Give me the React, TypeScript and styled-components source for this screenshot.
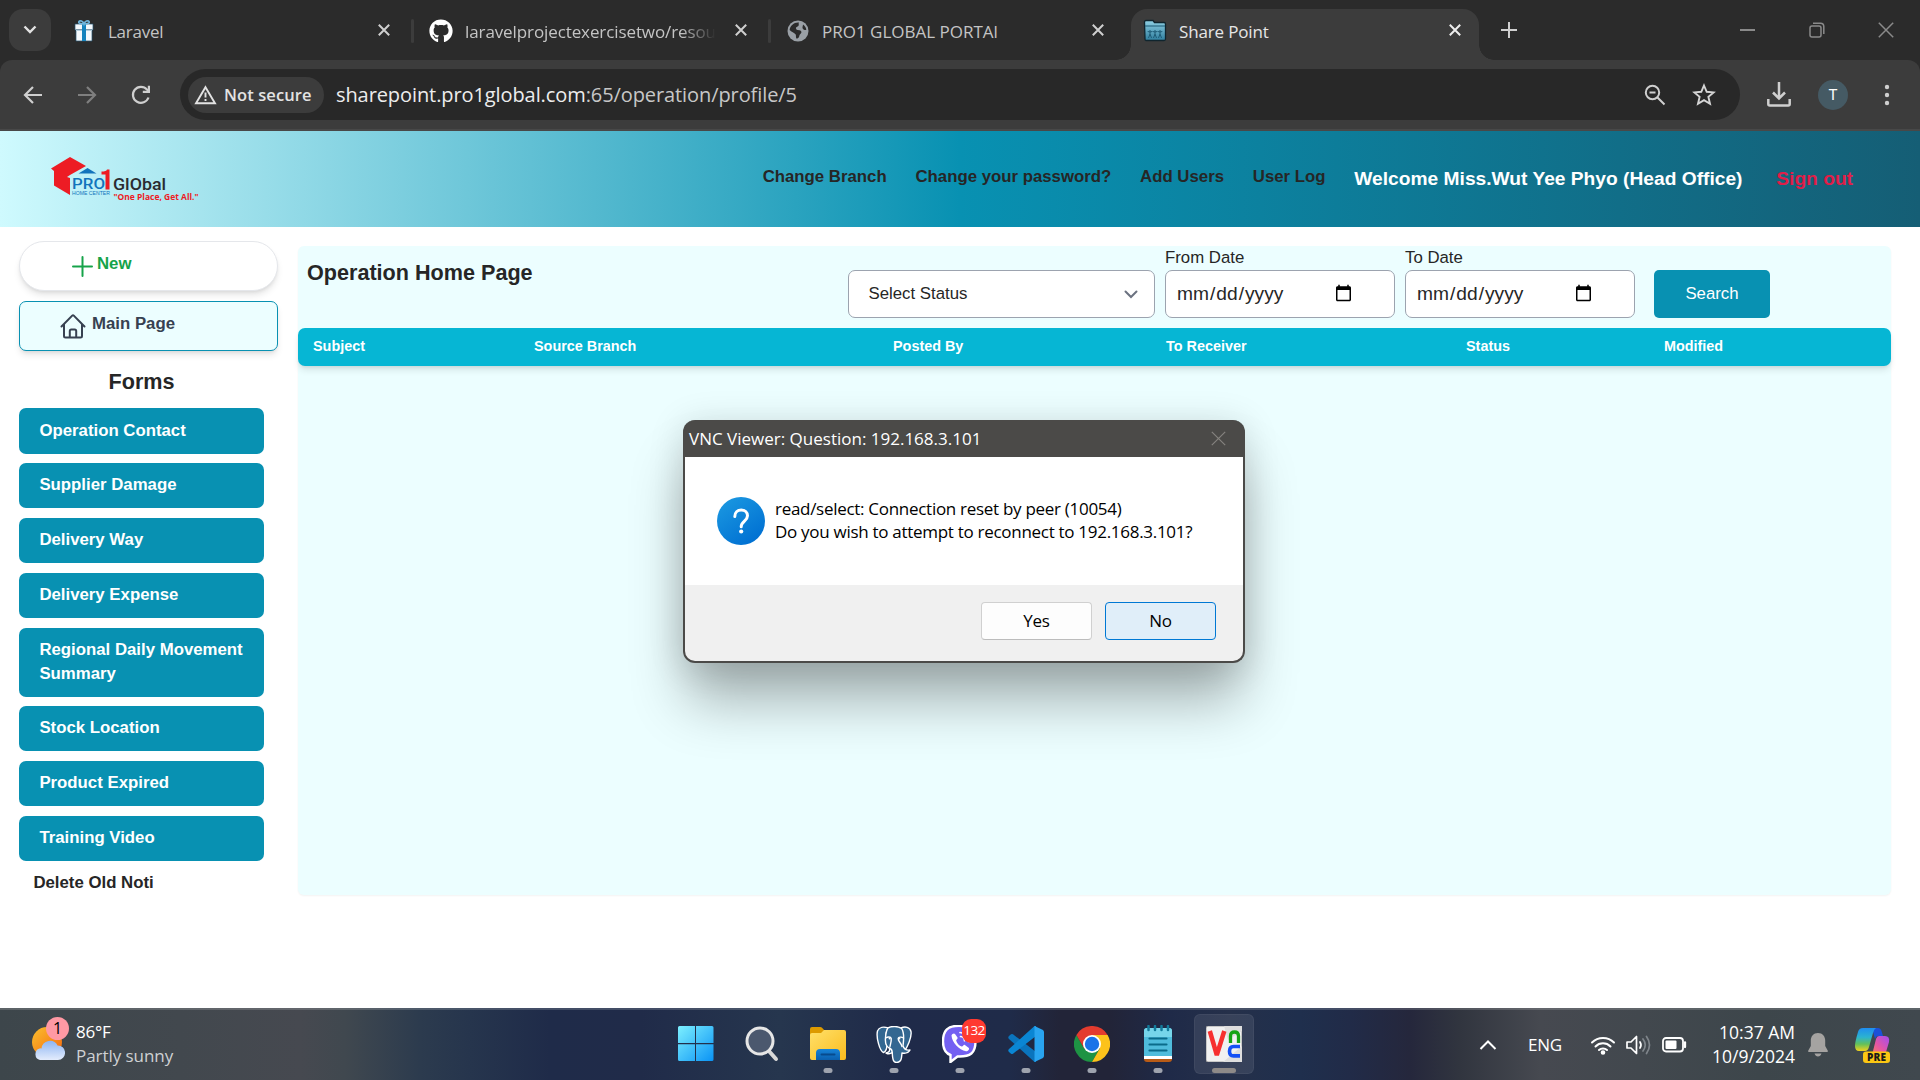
import React from "react";
import styled, { createGlobalStyle, css } from "styled-components";
import { FaGithub } from "react-icons/fa";

const ui = `"Open Sans", "Noto Sans", sans-serif`;
const arial = `"Liberation Sans", Arial, sans-serif`;

const GlobalStyle = createGlobalStyle`
  * { box-sizing: border-box; }
  html, body { margin: 0; padding: 0; background: #fff; overflow: hidden; }
  button { margin: 0; padding: 0; border: 0; background: none; font: inherit; color: inherit; letter-spacing: inherit; }
`;

const Screen = styled.div`
  position: relative;
  display: flex;
  flex-direction: column;
  width: 1920px;
  height: 1080px;
  overflow: hidden;
  font-family: ${arial};
  color: #262626;
`;

/* ---------- browser chrome ---------- */

const TabStrip = styled.div`
  display: flex;
  height: 60px;
  padding-left: 9px;
  background: #2b2b2b;
  font-family: ${ui};
`;

const TabSearch = styled.button`
  display: flex;
  align-items: center;
  justify-content: center;
  width: 42px;
  height: 42px;
  margin: 9px 4px 0 0;
  border-radius: 14px;
  background: #3c3c3c;
`;

const Tab = styled.div<{ $active?: boolean }>`
  position: relative;
  display: flex;
  align-items: center;
  width: 357px;
  height: 60px;
  padding: 2px 19px 0 17px;
  z-index: 0;
  color: ${(p) => (p.$active ? "#e6e6e6" : "#c4c4c4")};
  ${(p) =>
    p.$active &&
    css`
      &::before {
        content: "";
        position: absolute;
        z-index: -1;
        inset: 9px 4px 0 5px;
        border-radius: 16px 16px 0 0;
        background: #3c3c3c;
      }
      &::after {
        content: "";
        position: absolute;
        z-index: -1;
        left: -10px;
        right: -11px;
        bottom: 0;
        height: 15px;
        background:
          radial-gradient(circle at 0 0, transparent 14.5px, #3c3c3c 15px) left / 15px 15px no-repeat,
          radial-gradient(circle at 100% 0, transparent 14.5px, #3c3c3c 15px) right / 15px 15px no-repeat;
      }
    `}
`;

const TabDivider = styled.span`
  position: absolute;
  right: -2px;
  top: 19px;
  width: 3px;
  height: 24px;
  border-radius: 2px;
  background: #3c3c3c;
`;

const TabIcon = styled.span`
  display: flex;
  flex: none;
  align-items: center;
  justify-content: center;
  width: 24px;
  height: 24px;
  margin-right: 12px;
`;

const TabTitle = styled.span<{ $fade?: boolean; $ls?: number }>`
  flex: none;
  width: 251px;
  padding-top: 2px;
  overflow: hidden;
  white-space: nowrap;
  font-size: 17px;
  line-height: 26px;
  letter-spacing: ${(p) => p.$ls ?? -0.2}px;
  ${(p) => p.$fade && "mask-image: linear-gradient(90deg, #000 86%, transparent 100%);"}
`;

const TabClose = styled.button`
  display: flex;
  align-items: center;
  justify-content: center;
  width: 18px;
  height: 18px;
  margin: -2px 0 0 16px;
`;

const NewTab = styled.button`
  display: flex;
  align-items: center;
  justify-content: center;
  width: 42px;
  height: 60px;
  margin-left: 5px;
`;

const WindowControls = styled.div`
  display: flex;
  align-items: center;
  margin-left: auto;
  color: #8a8a8a;
`;

const ControlButton = styled.button`
  display: flex;
  align-items: center;
  justify-content: center;
  width: 69px;
  height: 58px;
`;

const ToolbarBack = styled.div`
  background: #2b2b2b;
`;

const Toolbar = styled.div`
  display: flex;
  align-items: center;
  height: 71px;
  padding: 0 0 0 12px;
  border-bottom: 2px solid #484848;
  border-radius: 12px 12px 0 0;
  background: #3c3c3c;
  font-family: ${ui};
`;

const ToolButton = styled.button<{ $w: number }>`
  display: flex;
  flex: none;
  align-items: center;
  justify-content: center;
  width: ${(p) => p.$w}px;
  height: 42px;
`;

const Omnibox = styled.div`
  display: flex;
  align-items: center;
  width: 1560px;
  height: 51px;
  margin-left: 18px;
  padding: 0 11px 0 8px;
  border-radius: 26px;
  background: #282828;
  flex: none;
`;

const SecurityChip = styled.span`
  display: flex;
  align-items: center;
  gap: 7px;
  width: 136px;
  height: 36px;
  margin-right: 12px;
  padding-left: 6px;
  border-radius: 18px;
  background: #3c3c3c;
  color: #e3e3e3;
  font-size: 16.5px;
  font-weight: 600;
  letter-spacing: 0.1px;
  white-space: nowrap;
`;

const Url = styled.span`
  flex: 1;
  color: #c7c7c7;
  font-size: 20px;
  letter-spacing: -0.09px;
  b { font-weight: 400; color: #ededed; }
`;

const Avatar = styled.span`
  display: flex;
  align-items: center;
  justify-content: center;
  width: 30px;
  height: 30px;
  margin-right: 12px;
  border-radius: 50%;
  background: #455a64;
  color: #fff;
  font: 15px Roboto, sans-serif;
`;

/* ---------- web page ---------- */

const SiteHeader = styled.header`
  display: flex;
  align-items: center;
  height: 96px;
  padding: 0 67px 0 51px;
  background: linear-gradient(90deg, #cffafe, #0891b2 50%, #155e75);
`;

const LogoBox = styled.div`
  width: 160px;
  height: 50px;
  margin-top: 6px;
`;

const Nav = styled.nav`
  display: flex;
  align-items: center;
  gap: 28.8px;
  margin-left: auto;
  white-space: nowrap;
  font-weight: 700;
`;

const NavLink = styled.a`
  margin-top: -4px;
  font-size: 16.8px;
  line-height: 24px;
`;

const Welcome = styled.span`
  color: #fff;
  font-size: 19.2px;
  line-height: 28px;
`;

const SignOut = styled(Welcome)`
  margin-left: 5px;
  color: #e11d48;
`;

const Page = styled.main`
  display: flex;
  height: 781px;
  padding: 14px 29px 0 19px;
  background: #fff;
`;

const Sidebar = styled.aside`
  display: flex;
  flex-direction: column;
  flex: none;
  width: 259px;
  margin-right: 20px;
`;

const SideAction = styled.button<{ $pill?: boolean }>`
  display: flex;
  flex: none;
  align-items: center;
  height: 50px;
  margin-bottom: 10px;
  padding-left: ${(p) => (p.$pill ? 52 : 40)}px;
  gap: ${(p) => (p.$pill ? 4 : 6)}px;
  border: 1px solid ${(p) => (p.$pill ? "#e5e7eb" : "#0891b2")};
  border-radius: ${(p) => (p.$pill ? 25 : 7)}px;
  background: ${(p) => (p.$pill ? "#fff" : "#ecfeff")};
  color: ${(p) => (p.$pill ? "#16a34a" : "#374151")};
  box-shadow: 0 5px 7px -1px rgba(0, 0, 0, 0.1), 0 2px 4px -2px rgba(0, 0, 0, 0.12);
  font-size: 16.8px;
  font-weight: 700;
  svg { flex: none; }
  span { margin-top: -5px; }
`;

const FormsTitle = styled.h2`
  width: 245px;
  margin: 7px 0 12.4px;
  text-align: center;
  font-size: 21.6px;
  line-height: 28px;
`;

const FormList = styled.div`
  display: flex;
  flex-direction: column;
  gap: 9.6px;
  width: 245px;
`;

const FormButton = styled.button`
  min-height: 45.2px;
  padding: 10.2px 18px 11px 20.4px;
  border-radius: 7px;
  background: #0891b2;
  color: #fff;
  text-align: left;
  font-size: 16.8px;
  font-weight: 700;
  line-height: 24px;
`;

const DeleteLink = styled.a`
  margin: 10px 0 0 14.4px;
  font-size: 16.8px;
  font-weight: 700;
  line-height: 24px;
`;

const Panel = styled.section`
  flex: 1;
  height: 649px;
  margin-top: 5px;
  border-radius: 6px;
  background: #ecfeff;
  box-shadow: 0 1px 2px rgba(0, 0, 0, 0.05);
`;

const FilterBar = styled.div`
  display: flex;
  align-items: flex-end;
  height: 72px;
  padding-left: 9px;
`;

const PageTitle = styled.h1`
  align-self: flex-start;
  width: 541px;
  margin: 13px 0 0;
  font-size: 21.6px;
  line-height: 28px;
`;

const fieldBox = css`
  height: 48px;
  border: 1px solid #9ca3af;
  border-radius: 7px;
  background: #fff;
`;

const StatusSelect = styled.div`
  ${fieldBox}
  display: flex;
  align-items: center;
  justify-content: space-between;
  width: 307px;
  margin-right: 10px;
  padding: 0 16px 0 19.5px;
  font-size: 16.8px;
`;

const Field = styled.label`
  display: flex;
  flex-direction: column;
  width: 230px;
  margin-right: 10px;
  font-size: 16.8px;
  line-height: 24px;
`;

const DateInput = styled.input`
  ${fieldBox}
  width: 230px;
  padding: 0 39px 0 10px;
  color: #262626;
  font-family: ${arial};
  font-size: 19.2px;
`;

const SearchButton = styled.button`
  width: 116px;
  height: 48px;
  margin-left: 9px;
  border-radius: 5px;
  background: #0891b2;
  color: #fff;
  font-size: 16.8px;
`;

const TableHead = styled.div`
  display: grid;
  grid-template-columns: 221px 359px 273px 300px 198px 1fr;
  align-items: center;
  height: 38px;
  margin-top: 10px;
  padding: 0 0 3px 15px;
  border-radius: 7px;
  background: #06b6d4;
  color: #fff;
  box-shadow: 0 5px 7px -1px rgba(0, 0, 0, 0.1), 0 2px 4px -2px rgba(0, 0, 0, 0.12);
  font-size: 14.4px;
  font-weight: 700;
`;

/* ---------- message box ---------- */

const Dialog = styled.div`
  position: absolute;
  left: 683px;
  top: 420px;
  display: flex;
  flex-direction: column;
  width: 562px;
  height: 243px;
  border: 2px solid #4b4a48;
  border-top: 0;
  border-radius: 12px;
  background: #4b4a48;
  box-shadow: 0 42px 56px -4px rgba(0, 0, 0, 0.3), 0 4px 36px rgba(0, 0, 0, 0.14);
  color: #000;
  font-family: ${ui};
  font-size: 17px;
  letter-spacing: -0.29px;
`;

const DialogTitle = styled.div`
  display: flex;
  align-items: center;
  justify-content: space-between;
  height: 37px;
  padding: 0 17px 1px 4px;
  color: #fff;
  letter-spacing: 0;
`;

const DialogBody = styled.div`
  display: flex;
  align-items: center;
  gap: 10px;
  height: 128px;
  padding-left: 32px;
  background: #fff;
  line-height: 23px;
  white-space: nowrap;
  p { margin: -2px 0 0; }
`;

const DialogFooter = styled.div`
  display: flex;
  flex: 1;
  justify-content: flex-end;
  gap: 13px;
  padding: 17px 27px 0 0;
  border-radius: 0 0 10px 10px;
  background: #f0f0f0;
`;

const DialogButton = styled.button<{ $focus?: boolean }>`
  width: 111px;
  height: 38px;
  padding-bottom: 2px;
  border: 1px solid ${(p) => (p.$focus ? "#0078d4" : "#d0d0d0")};
  border-bottom-color: ${(p) => (p.$focus ? "#0078d4" : "#bcbcbc")};
  border-radius: 4px;
  background: ${(p) => (p.$focus ? "#e0eef9" : "#fdfdfd")};
`;

/* ---------- taskbar ---------- */

const Taskbar = styled.footer`
  display: grid;
  grid-template-columns: 664px 596px 1fr;
  height: 72px;
  border-top: 2px solid rgba(255, 255, 255, 0.16);
  background: linear-gradient(
    90deg,
    #3d464b 0, #42484e 180px, #464950 300px, #40484f 345px, #2c3b4e 420px, #26354d 470px,
    #1f2b49 550px, #202b49 640px, #26364e 780px, #1f2a49 900px, #1f2b49 1010px, #222438 1060px, #222438 1110px,
    #1f2a48 1170px, #25304a 1230px, #1f2f4d 1300px, #212b48 1350px, #25273c 1410px, #31353f 1460px,
    #464950 1540px, #42484e 1640px, #3d464b 1760px, #40484e 1920px
  );
  background-origin: border-box;
  color: #fff;
  font-family: ${ui};
  font-size: 17px;
  letter-spacing: -0.2px;
`;

const Weather = styled.div`
  display: flex;
  gap: 9px;
  padding: 6px 0 0 31px;
`;

const WeatherIcon = styled.div`
  position: relative;
  width: 36px;
  height: 50px;
  padding-top: 9px;
`;

const WeatherBadge = styled.span`
  position: absolute;
  left: 15px;
  top: 1px;
  width: 23px;
  height: 23px;
  border-radius: 50%;
  background: #ff99a4;
  color: #000;
  text-align: center;
  font-size: 16px;
  line-height: 23px;
`;

const WeatherText = styled.div`
  padding-top: 4px;
  line-height: 24px;
  small { display: block; color: #cfd1d3; font-size: inherit; letter-spacing: -0.05px; }
`;

const Apps = styled.div`
  display: flex;
  gap: 6px;
  padding: 4px 0 0 2px;
`;

const TaskbarApp = styled.div<{ $state?: "open" | "active" }>`
  position: relative;
  display: flex;
  flex: none;
  align-items: center;
  justify-content: center;
  width: 60px;
  height: 60px;
  border-radius: 6px;
  ${(p) => p.$state === "active" && "background: rgba(255,255,255,.09); box-shadow: inset 0 0 0 1px rgba(255,255,255,.05);"}
  ${(p) =>
    p.$state &&
    css`
      &::after {
        content: "";
        position: absolute;
        bottom: 1px;
        left: 50%;
        width: ${p.$state === "active" ? 24 : 9}px;
        height: 5px;
        transform: translateX(-50%);
        border-radius: 3px;
        background: ${p.$state === "active" ? "#8e8a88" : "#9ea3ae"};
      }
    `}
`;

const CountBadge = styled.span`
  position: absolute;
  left: 32px;
  top: 5px;
  width: 24px;
  height: 24px;
  border-radius: 9px;
  background: #ff3a30;
  text-align: center;
  font-size: 13.5px;
  line-height: 23px;
  letter-spacing: -0.6px;
`;

const Tray = styled.div`
  display: flex;
  align-items: center;
  justify-content: flex-end;
  padding-right: 30px;
`;

const Language = styled.span`
  width: 35px;
  margin: -2px 27px 0 31px;
  white-space: nowrap;
`;

const TrayStatus = styled.div`
  display: flex;
  align-items: center;
  gap: 10px;
  width: 98px;
`;

const Clock = styled.div`
  width: 108px;
  margin-top: -2px;
  padding-right: 1px;
  text-align: right;
  white-space: nowrap;
  font-size: 17.5px;
  letter-spacing: 0;
  line-height: 24px;
`;

const TrayBell = styled.div`
  display: flex;
  margin: 0 27px 0 12px;
`;

/* ---------- drawings ---------- */

const Cross = ({ s = 12, c = "#d0d0d0", w = 2 }: { s?: number; c?: string; w?: number }) => (
  <svg width={s} height={s} viewBox={`0 0 ${s} ${s}`}>
    <path d={`M.8 .8L${s - 0.8} ${s - 0.8}M${s - 0.8} .8L.8 ${s - 0.8}`} stroke={c} strokeWidth={w} />
  </svg>
);

const Gift = () => (
  <svg width="22" height="24" viewBox="0 0 22 24">
    <path d="M2 5h18v6H2zM3 11h16v11H3z" fill="#f4f9fc" stroke="#24506f" strokeWidth=".7" />
    <path d="M9 5h4v17H9z" fill="#1583bd" />
    <path d="M11 5C7 5 5 4 6 2.500S10 2 11 5C12 2 15 1 16 2.500S15 5 11 5" fill="none" stroke="#6fb4da" strokeWidth="1.700" />
    <path d="M3 11.500h6m4 0h6" stroke="#b5cfdd" />
  </svg>
);

const Globe = () => (
  <svg width="22" height="22" viewBox="0 0 22 22">
    <circle cx="11" cy="11" r="10.500" fill="#9aa0a6" />
    <path d="M12 2.500c-1 1.500.8 2.500-1 3.700-2 1-2.500 1.200-1.700 3 1.200 1.300 4.200.3 5 2.300.7 2-1.800 2.600-2 4.600-.2 1.200-1.200 2.600-2.400 2.600-1.500-.5-.6-3-1.200-4.200C7.700 12.700 5 12.500 2.600 10c.6-4.500 4.600-8 9.400-7.500zM16 4.500c1.700 1 3 3 3.300 5.200-1.300.5-3 0-3.600-1.300-.6-1.400.3-2.300.3-3.900z" fill="#2b2b2b" />
  </svg>
);

const PeopleFolder = () => (
  <svg width="24" height="24" viewBox="0 0 24 24">
    <defs>
      <linearGradient id="folder" x1="0" y1="0" x2="0" y2="1">
        <stop offset="0" stopColor="#8fd0e4" />
        <stop offset="1" stopColor="#2f7e9e" />
      </linearGradient>
    </defs>
    <path d="M1.500 3q0-1.500 1.500-1.500h7l1.500 2H21q1.500 0 1.500 1.500V20q0 1.500-1.500 1.500H3Q2 21.500 2 20z" fill="url(#folder)" stroke="#10252e" strokeWidth="1.300" />
    <path d="M2 7h20" stroke="#1d5b75" />
    <g stroke="#1d5a75" strokeWidth="1" fill="none">
      <path d="M7 11v4l-1.500 4m1.500-4l1.500 4M4.700 12.500L7 13l2.300-.5M12 11v4l-1.500 4m1.500-4l1.500 4M9.700 12.500L12 13l2.300-.5M17 11v4l-1.500 4m1.500-4l1.500 4M14.700 12.500L17 13l2.300-.5" />
    </g>
  </svg>
);

const HomeIcon = () => (
  <svg width="26" height="27" viewBox="0 0 26 27" fill="none" stroke="currentColor" strokeWidth="2" strokeLinecap="round" strokeLinejoin="round">
    <path d="M1.500 13.500L12.200 2.600q.8-.8 1.600 0L24.500 13.500M4 11.200V23q0 1.500 1.500 1.500h15Q22 24.500 22 23V11.200M9.800 24.300V18q0-1.500 1.500-1.500h3.400q1.500 0 1.500 1.500v6.300" />
  </svg>
);

const SiteLogo = () => (
  <svg width="160" height="50" viewBox="0 0 160 50">
    <path d="M19 0L0 11.500 3 14v14.500l16 9.500V21l-3-1 3-2 16-9z" fill="#ed1c24" />
    <path d="M36.500 11l9 5.500h-18z" fill="#1274bc" />
    <text x="21" y="32" fontFamily="Roboto, sans-serif" fontSize="15.500" fontWeight="500" fill="#1274bc" textLength="33" lengthAdjust="spacingAndGlyphs">PRO</text>
    <path d="M50.500 14.500q5 0 5.500-2h2.500V32.500h-4V17.500h-4z" fill="#ed1c24" />
    <text x="21" y="37.700" fontFamily="Liberation Sans, sans-serif" fontSize="5.200" fill="#1274bc" textLength="38" lengthAdjust="spacingAndGlyphs">HOME CENTER</text>
    <text x="62" y="32.700" fontFamily="Roboto, sans-serif" fontSize="17" fontWeight="500" fill="#2b2b30" textLength="53" lengthAdjust="spacingAndGlyphs">GlObal</text>
    <text x="62.500" y="42.700" fontFamily="Open Sans, sans-serif" fontSize="9" fontWeight="700" fill="#ed1c24" textLength="85" lengthAdjust="spacingAndGlyphs">"One Place, Get All."</text>
  </svg>
);

const QuestionIcon = () => (
  <svg width="48" height="48" viewBox="0 0 48 48">
    <defs>
      <linearGradient id="question" x1="0" y1="0" x2=".7" y2="1">
        <stop offset="0" stopColor="#1d9be2" />
        <stop offset="1" stopColor="#0070d2" />
      </linearGradient>
    </defs>
    <circle cx="24" cy="24" r="24" fill="url(#question)" />
    <path d="M17.800 19.500c0-4 2.700-6.500 6.400-6.500s6.300 2.400 6.300 5.800c0 5.200-6.300 5.500-6.300 11" fill="none" stroke="#fff" strokeWidth="3" strokeLinecap="round" />
    <circle cx="24.200" cy="34.500" r="2.100" fill="#fff" />
  </svg>
);

const WeatherDrawing = () => (
  <svg width="34" height="36" viewBox="0 0 34 36">
    <defs>
      <linearGradient id="sun" x1="0" y1="0" x2="1" y2="1">
        <stop offset="0" stopColor="#fbc02d" />
        <stop offset="1" stopColor="#f4650f" />
      </linearGradient>
      <linearGradient id="cloud" x1="0" y1="0" x2="0" y2="1">
        <stop offset="0" stopColor="#8db5f3" />
        <stop offset="1" stopColor="#e3ecfc" />
      </linearGradient>
    </defs>
    <circle cx="16" cy="17" r="15" fill="url(#sun)" />
    <path d="M9 35a6 6 0 01-.5-11.500 5 5 0 012-.1 8.500 8.500 0 0116-3 7 7 0 01.5 14.600z" fill="url(#cloud)" />
  </svg>
);

const WindowsIcon = () => (
  <svg width="36" height="36" viewBox="0 0 36 36">
    <defs>
      <linearGradient id="win" x1="0" y1="0" x2="1" y2="1">
        <stop offset="0" stopColor="#7df0ff" />
        <stop offset="1" stopColor="#0a93f5" />
      </linearGradient>
    </defs>
    <path d="M1.500 0H17v17H0V1.500Q0 0 1.500 0zM18 0h16q1.500 0 1.500 1.500V17H18zM0 18.200h17V35H1.500Q0 35 0 33.500zM18 18.200h17.500v15.300q0 1.500-1.500 1.500H18z" fill="url(#win)" />
  </svg>
);

const SearchIcon = () => (
  <svg width="34" height="36" viewBox="0 0 34 36">
    <path d="M23 24l8 9" stroke="#d8d8d8" strokeWidth="4" strokeLinecap="round" />
    <circle cx="15" cy="15" r="13" fill="#4b586e" stroke="#e6e6e6" strokeWidth="3" />
  </svg>
);

const ExplorerIcon = () => (
  <svg width="36" height="34" viewBox="0 0 36 34">
    <defs>
      <linearGradient id="exp" x1="0" y1="0" x2="1" y2="1">
        <stop offset="0" stopColor="#ffe06a" />
        <stop offset="1" stopColor="#fbbc1d" />
      </linearGradient>
      <linearGradient id="expBlue" x1="0" y1="0" x2="0" y2="1">
        <stop offset="0" stopColor="#1683d8" />
        <stop offset="1" stopColor="#0b5fae" />
      </linearGradient>
    </defs>
    <path d="M0 8V2q0-2 2-2h8q1.500 0 2.500 1.200L15 4v6H0z" fill="#dd9a00" />
    <path d="M0 8q0-2 2-2h9l3-3h20q2 0 2 2v26q0 2-2 2H2q-2 0-2-2z" fill="url(#exp)" />
    <path d="M6 33v-7q0-4 4-4h16q4 0 4 4v7z" fill="url(#expBlue)" />
    <path d="M11.500 27.500h13" stroke="#074a8d" strokeWidth="2" strokeLinecap="round" />
  </svg>
);

const PostgresIcon = () => (
  <svg width="36" height="37" viewBox="0 0 36 37">
    <g fill="#336791" stroke="#fff" strokeWidth="1.400" strokeLinejoin="round" strokeLinecap="round">
      <path d="M7.500 26.500C3.500 25 0 11 1.500 5 3 .8 8 .5 12 1.800 10 6 9 12 10.500 18.500c1 3.500-1 7.500-3 8z" />
      <path d="M25 2c4-2 9-1 10 3.500 1 6-4 16-6.500 19.500-2 1-3-2-3-5z" />
      <path d="M12 1.800c4-2 10-1.600 13.500.5C29 7 27.500 15 27 20c1 3 4 4.500 7 4-1.500 3-5 3.500-8 3-.5 4 0 9-5 9.500-4 .5-4.500-4-4.800-10-1.700 1.500-4.200 1.500-6.200.5 3-.5 4-2 3.500-4.500C10 20.500 9 17 9.500 12 9.700 8 10.500 4 12 1.800z" />
      <path d="M9.700 12c2-1.500 5-1.500 5.500.5.300 3-.7 5-1.200 8M27.500 12c-2-1.500-5-1-5.300.5-.2 3 2.800 4 3.800 8M13.500 22c2 1 2.700 2 2.700 4.500" fill="none" />
    </g>
    <circle cx="13.500" cy="12.500" r=".9" fill="#fff" />
    <circle cx="23.500" cy="12.500" r=".9" fill="#fff" />
  </svg>
);

const ViberIcon = () => (
  <svg width="36" height="38" viewBox="0 0 36 38">
    <path d="M17 .8C6 .8 1 5 1 16.500c0 7 2 11.500 7.500 13.500v7l7-5.500c13 .5 18-3.500 18-15S28 .8 17 .8z" fill="#7360f2" stroke="#fff" strokeWidth="2.400" />
    <path d="M9.500 10.500C10 9 12 7.700 13 9l2.500 3.500c.7 1.300-1.700 2-1.300 3.300 1 3 3 5 5.500 5.800 1.500.2 1.600-2.400 3.200-1.600l3.700 2.700c1.400 1.300-.6 3.700-2.600 3.600C17 25 10 17.500 9.500 10.500z" fill="#fff" />
    <path d="M18 7.500c5 .4 8.500 3.500 8.500 9M18.500 11.500c2.500.2 4 1.800 4 4.200" fill="none" stroke="#fff" strokeWidth="1.700" strokeLinecap="round" />
  </svg>
);

const CodeIcon = () => (
  <svg width="36" height="36" viewBox="0 0 36 36">
    <path d="M1 13q-1.500-1.500 0-3l2-1.700q1-.8 2 0L28 26v10h-1.500z" fill="#0a74bd" />
    <path d="M1 23q-1.500 1.500 0 3l2 1.700q1 .8 2 0L28 10V0h-1.500z" fill="#0a86d4" />
    <path d="M26.500 0L34.500 3.700Q36 4.500 36 6v24q0 1.500-1.500 2.300L26.500 36z" fill="#29a4f0" />
  </svg>
);

const ChromeIcon = () => (
  <svg width="36" height="36" viewBox="0 0 36 36">
    <path d="M18 18L2.400 9A18 18 0 0133.600 9z" fill="#e33b2e" />
    <path d="M10.200 22.500L2.400 9A18 18 0 0018 36l7.800-13.500z" fill="#1e9344" />
    <path d="M25.800 22.500L18 36A18 18 0 0033.600 9H18z" fill="#fcc21b" />
    <path d="M2.400 9L10.200 22.500 18 9z" fill="#e33b2e" />
    <circle cx="18" cy="18" r="9" fill="#fff" />
    <circle cx="18" cy="18" r="7.200" fill="#1a73e8" />
  </svg>
);

const NotepadIcon = () => (
  <svg width="30" height="38" viewBox="0 0 30 38">
    <path d="M1 30h28v4q0 3-3 3H4q-3 0-3-3z" fill="#b85b16" />
    <path d="M1 30h28v4H1z" fill="#fff" />
    <path d="M1 6q0-3 3-3h22q3 0 3 3v25H1z" fill="#4fbcdc" />
    <path d="M1 6q0-3 3-3h22q3 0 3 3v6H1z" fill="#76d5ea" />
    <path d="M6.500 13.500h17m-17 6h17m-17 6h17" stroke="#0a6b8a" strokeWidth="2.200" strokeLinecap="round" />
    <path d="M5.500 1v4M12 1v4m6.500-4v4M25 1v4" stroke="#137b9b" strokeWidth="2.500" strokeLinecap="round" />
  </svg>
);

const VncIcon = () => (
  <svg width="36" height="36" viewBox="0 0 36 36">
    <rect width="36" height="36" rx="2" fill="#f1f1f1" stroke="#8b8b8b" strokeWidth=".8" />
    <path d="M17 36L36 20v16zM18 0h18v5L22 14z" fill="#dedede" />
    <path d="M3.800 5l7 24 7.500-24" fill="none" stroke="#f72f2f" strokeWidth="4.500" strokeLinejoin="bevel" />
    <path d="M24.500 17v-7q0-4 4-4t4 4v7" fill="none" stroke="#15a315" strokeWidth="3.300" />
    <path d="M34 20.500h-6.500q-4 0-4 4.700t4 4.700H34" fill="none" stroke="#1450f5" strokeWidth="3.600" />
  </svg>
);

const WifiIcon = () => (
  <svg width="26" height="20" viewBox="0 0 26 20" fill="none" stroke="#fff" strokeWidth="2" strokeLinecap="round">
    <path d="M2 7.500a15.500 15.500 0 0122 0M5.500 11.500a10.500 10.500 0 0115 0M9 15a5.800 5.800 0 018 0" />
    <circle cx="13" cy="17.500" r="1.300" fill="#fff" />
  </svg>
);

const SpeakerIcon = () => (
  <svg width="26" height="20" viewBox="0 0 26 20" fill="none" stroke="#fff" strokeWidth="1.700" strokeLinejoin="round" strokeLinecap="round">
    <path d="M1 7h4l5.500-5.500v17L5 13H1z" />
    <path d="M14 7q2 3 0 6" />
    <path d="M17 4q4.500 6 0 12M20.500 1.500q6 8.500 0 17" stroke="#7f858b" />
  </svg>
);

const BatteryIcon = () => (
  <svg width="25" height="18" viewBox="0 0 25 18">
    <rect x="1" y="2" width="20" height="13.500" rx="3" fill="none" stroke="#fff" strokeWidth="1.800" />
    <rect x="3.500" y="4.500" width="11" height="8.500" rx="1" fill="#fff" />
    <path d="M23 6.500v4.500" stroke="#fff" strokeWidth="2.300" strokeLinecap="round" />
  </svg>
);

const BellIcon = () => (
  <svg width="20" height="24" viewBox="0 0 20 24" fill="#a5a3a1">
    <path d="M10 0C5.500 0 2.800 3.500 2.800 7.500V13L.3 17.500q-.5 1.500 1 1.500h17.400q1.500 0 1-1.500L17.200 13V7.500C17.200 3.500 14.500 0 10 0zM6.500 20.500h7q-1 3-3.500 3t-3.500-3z" />
  </svg>
);

const CopilotIcon = () => (
  <svg width="35" height="36" viewBox="0 0 35 36">
    <defs>
      <linearGradient id="copA" x1="0" y1="0" x2="0" y2="1">
        <stop offset="0" stopColor="#1f8df0" />
        <stop offset=".4" stopColor="#2bb3d0" />
        <stop offset=".7" stopColor="#63c05a" />
        <stop offset="1" stopColor="#f3d21c" />
      </linearGradient>
      <linearGradient id="copB" x1="1" y1="0" x2="0" y2="1">
        <stop offset="0" stopColor="#a24ef0" />
        <stop offset=".5" stopColor="#e455a5" />
        <stop offset="1" stopColor="#ff8a4c" />
      </linearGradient>
    </defs>
    <path d="M17 1h6q2.500 0 3.500 3l1.500 5h-5q-2 0-3 3z" fill="#1b50d8" />
    <path d="M8 1h13q-2 1-3 5l-4 14q-1 4-4 4H4q-4 0-4-5 0-4 3-14 1-4 5-4z" fill="url(#copA)" />
    <path d="M24 9h6q5 0 4 6l-3 10q-1 4-4 4H14q3-1 4-5l3-12q1-3 3-3z" fill="url(#copB)" />
    <rect x="8" y="24.500" width="27" height="11.500" rx="3" fill="#fcc713" />
    <text x="21.500" y="33.900" textAnchor="middle" fontFamily="Open Sans, sans-serif" fontSize="10" fontWeight="800" letterSpacing=".2" fill="#1b1b1b">PRE</text>
  </svg>
);

const tabs = [
  { title: "Laravel", icon: <Gift />, ls: -0.25 },
  { title: "laravelprojectexercisetwo/resou", icon: <FaGithub size={24} color="#fff" />, fade: true, ls: -0.1 },
  { title: "PRO1 GLOBAL PORTAl", icon: <Globe />, ls: 0 },
  { title: "Share Point", icon: <PeopleFolder />, active: true, ls: -0.15 },
];

const forms = [
  "Operation Contact",
  "Supplier Damage",
  "Delivery Way",
  "Delivery Expense",
  "Regional Daily Movement Summary",
  "Stock Location",
  "Product Expired",
  "Training Video",
];

const columns = ["Subject", "Source Branch", "Posted By", "To Receiver", "Status", "Modified"];

const BrowserTabs = () => (
  <TabStrip>
    <TabSearch>
      <svg width="14" height="10" viewBox="0 0 14 10"><path d="M1.500 1.500L7 7l5.500-5.500" fill="none" stroke="#e3e3e3" strokeWidth="2.400" /></svg>
    </TabSearch>
    {tabs.map((t, i) => (
      <Tab key={t.title} $active={t.active}>
        <TabIcon>{t.icon}</TabIcon>
        <TabTitle $fade={t.fade} $ls={t.ls}>{t.title}</TabTitle>
        <TabClose><Cross c={t.active ? "#eee" : "#cfcfcf"} /></TabClose>
        {i < 2 && <TabDivider />}
      </Tab>
    ))}
    <NewTab>
      <svg width="16" height="16" viewBox="0 0 16 16"><path d="M8 0v16M0 8h16" stroke="#d0d0d0" strokeWidth="2" /></svg>
    </NewTab>
    <WindowControls>
      <ControlButton><svg width="15" height="2"><path d="M0 1h15" stroke="currentColor" strokeWidth="2" /></svg></ControlButton>
      <ControlButton>
        <svg width="16" height="16" viewBox="0 0 16 16" fill="none" stroke="currentColor" strokeWidth="1.500">
          <rect x="1" y="4" width="11" height="11" rx="2" /><path d="M4 1.200h7.500q3.300 0 3.300 3.300V12" />
        </svg>
      </ControlButton>
      <ControlButton><Cross s={16} c="#8a8a8a" w={1.500} /></ControlButton>
    </WindowControls>
  </TabStrip>
);

const BrowserToolbar = () => (
  <ToolbarBack>
    <Toolbar>
      <ToolButton $w={42}><svg width="20" height="18" viewBox="0 0 20 18"><path d="M19 9H2M10 1L2 9l8 8" fill="none" stroke="#cfcfcf" strokeWidth="2.200" /></svg></ToolButton>
      <ToolButton $w={66}><svg width="20" height="18" viewBox="0 0 20 18"><path d="M1 9h17M10 1l8 8-8 8" fill="none" stroke="#7f7f7f" strokeWidth="2.200" /></svg></ToolButton>
      <ToolButton $w={42}>
        <svg width="20" height="20" viewBox="0 0 20 20"><path d="M17.500 12.500A8 8 0 1116 4.600l2 2.200" fill="none" stroke="#cfcfcf" strokeWidth="2.200" /><path d="M19 .8V8h-7.200V5.800h5V.8z" fill="#cfcfcf" /></svg>
      </ToolButton>
      <Omnibox>
        <SecurityChip>
          <svg width="23" height="20" viewBox="0 0 23 20"><path d="M11.500 2.200L21 18.200H2z" fill="none" stroke="#e3e3e3" strokeWidth="1.900" /><path d="M11.500 7.500v5m0 1.500v2" stroke="#e3e3e3" strokeWidth="1.900" /></svg>
          Not secure
        </SecurityChip>
        <Url><b>sharepoint.pro1global.com</b>:65/operation/profile/5</Url>
        <ToolButton $w={48}>
          <svg width="22" height="22" viewBox="0 0 22 22" fill="none" stroke="#cfcfcf" strokeWidth="2"><circle cx="8.500" cy="8.500" r="6.700" /><path d="M13.500 13.500l7 7M5.500 8.500h6" /></svg>
        </ToolButton>
        <ToolButton $w={50}>
          <svg width="24" height="23" viewBox="0 0 24 23"><path d="M12 2.500l2.700 6.300 6.900.6-5.200 4.500 1.600 6.800-6-3.600-6 3.600 1.600-6.800-5.200-4.500 6.900-.6z" fill="none" stroke="#d5d5d5" strokeWidth="1.900" /></svg>
        </ToolButton>
      </Omnibox>
      <ToolButton $w={78}>
        <svg width="24" height="25" viewBox="0 0 24 25" fill="none" stroke="#cfcfcf" strokeWidth="2.500"><path d="M12 0v16M6 10.500l6 6 6-6M1.300 17v5q0 1.500 1.500 1.500h18.400q1.500 0 1.500-1.500v-5" /></svg>
      </ToolButton>
      <Avatar>T</Avatar>
      <ToolButton $w={54}>
        <svg width="6" height="22" viewBox="0 0 6 22" fill="#cfcfcf"><circle cx="3" cy="3" r="2.200" /><circle cx="3" cy="11" r="2.200" /><circle cx="3" cy="19" r="2.200" /></svg>
      </ToolButton>
    </Toolbar>
  </ToolbarBack>
);

const QuestionDialog = () => (
  <Dialog>
    <DialogTitle>
      <span>VNC Viewer: Question: 192.168.3.101</span>
      <Cross s={15} c="#85837f" w={1.200} />
    </DialogTitle>
    <DialogBody>
      <QuestionIcon />
      <p>
        read/select: Connection reset by peer (10054)<br />
        Do you wish to attempt to reconnect to 192.168.3.101?
      </p>
    </DialogBody>
    <DialogFooter>
      <DialogButton>Yes</DialogButton>
      <DialogButton $focus>No</DialogButton>
    </DialogFooter>
  </Dialog>
);

const DesktopTaskbar = () => (
  <Taskbar>
    <Weather>
      <WeatherIcon><WeatherDrawing /><WeatherBadge>1</WeatherBadge></WeatherIcon>
      <WeatherText>86°F<small>Partly sunny</small></WeatherText>
    </Weather>
    <Apps>
      <TaskbarApp><WindowsIcon /></TaskbarApp>
      <TaskbarApp><SearchIcon /></TaskbarApp>
      <TaskbarApp $state="open"><ExplorerIcon /></TaskbarApp>
      <TaskbarApp $state="open"><PostgresIcon /></TaskbarApp>
      <TaskbarApp $state="open"><ViberIcon /><CountBadge>132</CountBadge></TaskbarApp>
      <TaskbarApp $state="open"><CodeIcon /></TaskbarApp>
      <TaskbarApp $state="open"><ChromeIcon /></TaskbarApp>
      <TaskbarApp $state="open"><NotepadIcon /></TaskbarApp>
      <TaskbarApp $state="active"><VncIcon /></TaskbarApp>
    </Apps>
    <Tray>
      <svg width="18" height="10" viewBox="0 0 18 10"><path d="M1.500 9L9 1.500 16.500 9" fill="none" stroke="#fff" strokeWidth="2" /></svg>
      <Language>ENG</Language>
      <TrayStatus><WifiIcon /><SpeakerIcon /><BatteryIcon /></TrayStatus>
      <Clock>10:37 AM<br />10/9/2024</Clock>
      <TrayBell><BellIcon /></TrayBell>
      <CopilotIcon />
    </Tray>
  </Taskbar>
);

export default function App() {
  return (
    <Screen>
      <GlobalStyle />
      <BrowserTabs />
      <BrowserToolbar />
      <SiteHeader>
        <LogoBox><SiteLogo /></LogoBox>
        <Nav>
          <NavLink>Change Branch</NavLink>
          <NavLink>Change your password?</NavLink>
          <NavLink>Add Users</NavLink>
          <NavLink>User Log</NavLink>
          <Welcome>Welcome Miss.Wut Yee Phyo (Head Office)</Welcome>
          <SignOut>Sign out</SignOut>
        </Nav>
      </SiteHeader>
      <Page>
        <Sidebar>
          <SideAction $pill>
            <svg width="21" height="21" viewBox="0 0 21 21"><path d="M10.500 1v19M1 10.500h19" stroke="#16a34a" strokeWidth="2" strokeLinecap="round" /></svg>
            <span>New</span>
          </SideAction>
          <SideAction>
            <HomeIcon />
            <span>Main Page</span>
          </SideAction>
          <FormsTitle>Forms</FormsTitle>
          <FormList>{forms.map((f) => <FormButton key={f}>{f}</FormButton>)}</FormList>
          <DeleteLink>Delete Old Noti</DeleteLink>
        </Sidebar>
        <Panel>
          <FilterBar>
            <PageTitle>Operation Home Page</PageTitle>
            <StatusSelect>
              Select Status
              <svg width="14" height="9" viewBox="0 0 14 9"><path d="M1.500 1.500L7 7l5.500-5.500" fill="none" stroke="#6b7280" strokeWidth="2" strokeLinecap="round" /></svg>
            </StatusSelect>
            <Field>From Date<DateInput type="date" /></Field>
            <Field>To Date<DateInput type="date" /></Field>
            <SearchButton>Search</SearchButton>
          </FilterBar>
          <TableHead>{columns.map((c) => <span key={c}>{c}</span>)}</TableHead>
        </Panel>
      </Page>
      <DesktopTaskbar />
      <QuestionDialog />
    </Screen>
  );
}
